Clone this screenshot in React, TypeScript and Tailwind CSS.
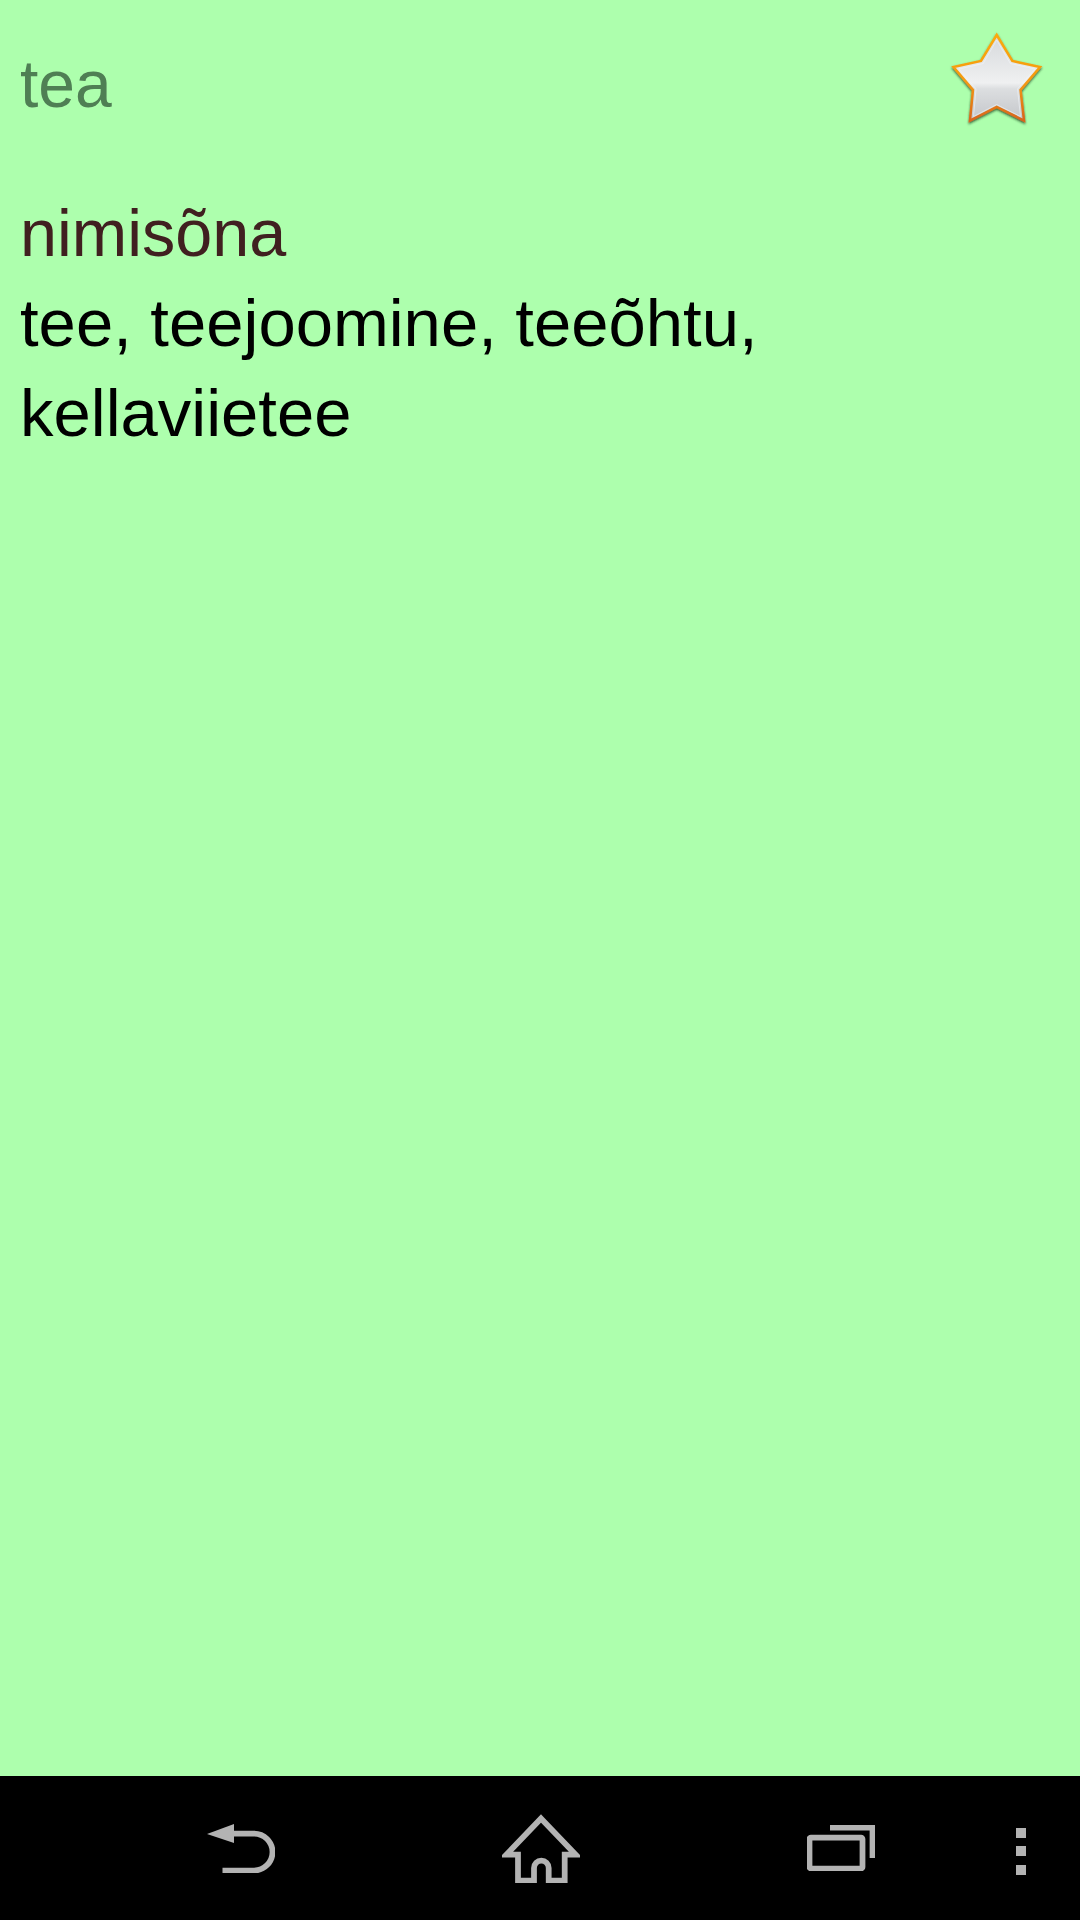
function StarIcon() {
  const points =
    "45.7,3 61.3,29 89,35 69.5,58 73,88.5 45.7,75 19,88.5 22,58 2.5,35 30,29";
  return (
    <svg width="100" height="100" viewBox="-4 -4 100 100" className="shrink-0">
      <defs>
        <linearGradient id="starFill" x1="0" y1="0" x2="0" y2="1">
          <stop offset="0" stopColor="#d6d8db" />
          <stop offset="0.56" stopColor="#eff0f1" />
          <stop offset="0.63" stopColor="#dcdee0" />
          <stop offset="1" stopColor="#c4c6ca" />
        </linearGradient>
        <linearGradient id="starEdge" x1="0" y1="0" x2="0" y2="1">
          <stop offset="0" stopColor="#fba90c" />
          <stop offset="0.55" stopColor="#f49a12" />
          <stop offset="1" stopColor="#d8651c" />
        </linearGradient>
        <filter id="starShadow" x="-10%" y="-10%" width="120%" height="120%">
          <feDropShadow dx="0" dy="1.5" stdDeviation="1" floodColor="#1f3a1f" floodOpacity="0.8" />
        </filter>
      </defs>
      <polygon
        points={points}
        fill="url(#starFill)"
        stroke="url(#starEdge)"
        strokeWidth="2.5"
        filter="url(#starShadow)"
      />
      <polygon
        points="45.7,8 59.3,31.5 84,37 66.5,57 69.5,84.5 45.7,72.5 22.5,84.5 25,57 8,37 32.2,31.5"
        fill="none"
        stroke="#f2f5fa"
        strokeOpacity="0.55"
        strokeWidth="1"
      />
    </svg>
  );
}

function BackIcon() {
  return (
    <svg width="68" height="50" viewBox="0 -1 68 50" fill="none" stroke="#b3b3b3" strokeWidth="5.75">
      <path d="M0 10 L27 0 V19 Z" fill="#b3b3b3" stroke="none" />
      <path d="M26 9.5 H47 A18.25 18.25 0 0 1 47 46.5 H15.5" />
    </svg>
  );
}

function HomeIcon() {
  return (
    <svg width="78" height="70" viewBox="0 -2 78 70" fill="none" stroke="#b3b3b3" strokeWidth="5.75">
      <path d="M39 3.5 L73.5 39.5 H62.7 V65.5 H46.7 V53 A7.35 7.35 0 0 0 32 53 V65.5 H16 V39.5 H4.5 Z" />
    </svg>
  );
}

function RecentsIcon() {
  return (
    <svg width="68" height="46" viewBox="0 0 68 46" fill="none" stroke="#b3b3b3" strokeWidth="5.75">
      <rect x="2.5" y="12.5" width="53" height="31" rx="1.5" />
      <path d="M23 2.5 H65.5 V33" />
    </svg>
  );
}

export default function App() {
  return (
    <div
      className="flex h-[1920px] w-[1080px] flex-col overflow-hidden bg-[#adffad] text-[67px] leading-[90px]"
      style={{ fontFamily: '"Liberation Sans", Arial, sans-serif' }}
    >
      <main className="flex-1">
        <header className="flex h-[188px] items-start justify-between pl-5 pr-[33px] pt-7">
          <h1 className="mt-[11px] text-[66px] text-[#4f7f54]">tea</h1>
          <StarIcon />
        </header>
        <div className="px-5">
          <div className="text-[66.5px] text-[#402020]">nimisõna</div>
          <div className="text-black">tee, teejoomine, teeõhtu, kellaviietee</div>
        </div>
      </main>
      <nav className="flex h-[144px] items-center bg-black pl-[91px]">
        <button className="flex w-[300px] justify-center">
          <BackIcon />
        </button>
        <button className="flex w-[300px] justify-center">
          <HomeIcon />
        </button>
        <button className="flex w-[300px] justify-center">
          <RecentsIcon />
        </button>
        <button className="mt-[6px] flex w-[60px] flex-col items-center gap-[8.5px]">
          <span className="h-[10px] w-[10px] bg-[#b3b3b3]" />
          <span className="h-[10px] w-[10px] bg-[#b3b3b3]" />
          <span className="h-[10px] w-[10px] bg-[#b3b3b3]" />
        </button>
      </nav>
    </div>
  );
}
